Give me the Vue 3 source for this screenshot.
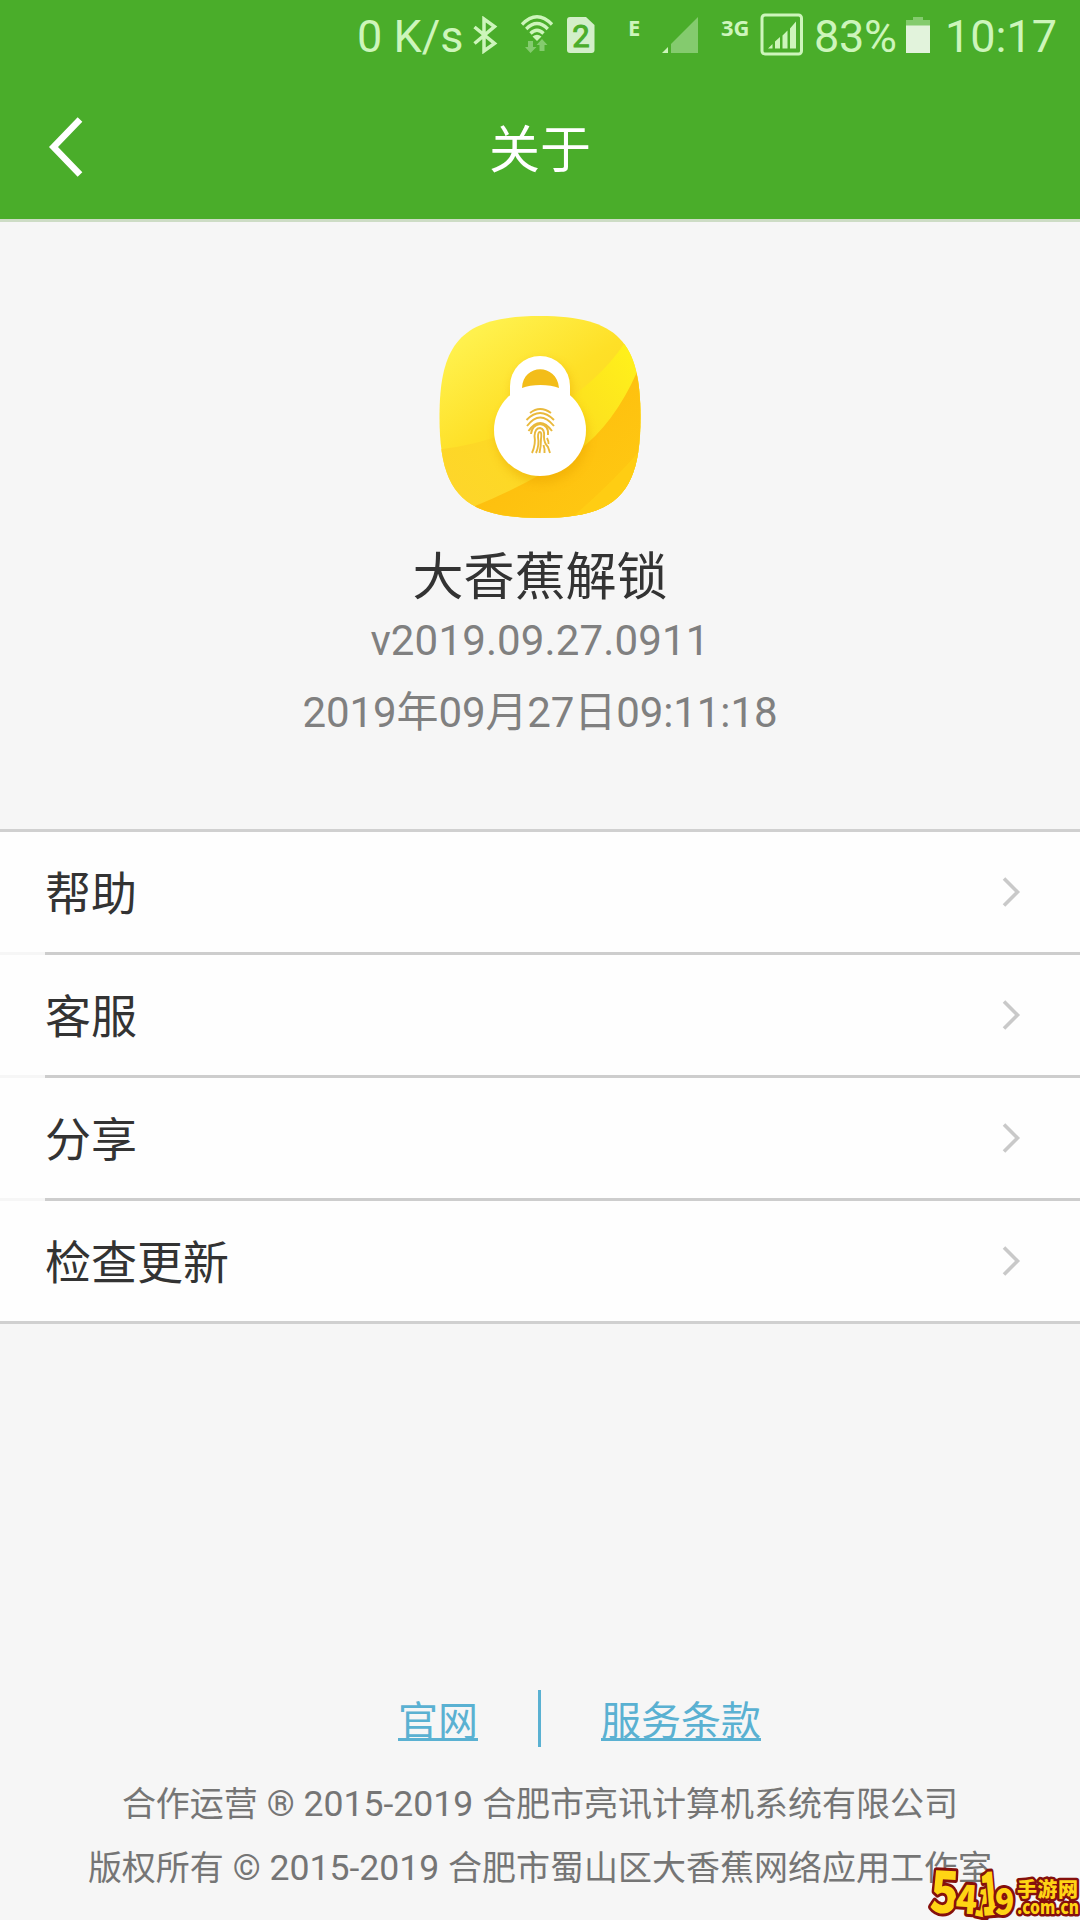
<script setup>
const menu = ['帮助', '客服', '分享', '检查更新']
</script>

<template>
  <div class="page">
    <header class="top">
      <div class="status">
        <span class="speed">0 K/s</span>
        <svg class="bt" viewBox="0 0 26 38"><path d="M2.5 11 L22.5 27.5 L12 35 V3 L22.5 10.5 L2.5 27.5" /></svg>
        <svg class="wifi" viewBox="0 0 34 40">
          <g class="arcs">
            <path d="M2 10.500 Q17 -5 32 10.500" /><path d="M6.200 15 Q17 4 27.800 15" /><path d="M10.500 19.500 Q17 13 23.500 19.500" />
          </g>
          <path class="solid" d="M12.500 22.500 Q17 19 21.500 22.500 L17 27 Z" />
          <path class="dim" d="M8 27 h5 v6 h3.500 L10.500 39 L5 33 h3 Z M19.500 37 v-6 h-3 L22 25 L27.500 31 h-3 v6 Z" />
        </svg>
        <svg class="sim" viewBox="0 0 30 38">
          <path d="M4 1 H20 L28.500 9 V34 Q28.500 37 25.500 37 H4 Q1 37 1 34 V4 Q1 1 4 1 Z" />
          <text x="15" y="30.500" text-anchor="middle">2</text>
        </svg>
        <span class="net edge">E</span>
        <svg class="signal" viewBox="0 0 38 38"><path class="dim" d="M10 37 V28 L37 1 V37 Z" /><path class="solid" d="M1 37 L7 31 V37 Z" /></svg>
        <span class="net third">3G</span>
        <svg class="boxed" viewBox="0 0 44 44">
          <rect x="2" y="2" width="39.500" height="39" rx="3" />
          <path d="M8 35.500 L12.500 31 V35.500 Z M15 35.500 V28.500 L20 24 V35.500 Z M22.500 35.500 V22.500 L27.500 17.500 V35.500 Z M30 35.500 V15.500 L36 8.500 V35.500 Z" />
        </svg>
        <span class="percent">83%</span>
        <svg class="battery" viewBox="0 0 24 36"><path class="dim" d="M0 3 H7 V0 H17 V3 H24 V9 H0 Z" /><path class="full" d="M0 8.500 H24 V36 H0 Z" /></svg>
        <span class="clock">10:17</span>
      </div>
      <div class="nav">
        <svg class="back" viewBox="0 0 36 60"><path d="M32 2.500 L5.500 30 L32 57.500" /></svg>
        <h1>关于</h1>
        <span class="balance"></span>
      </div>
    </header>

    <section class="hero">
      <svg class="logo" viewBox="19 15 202 204">
        <defs>
          <linearGradient id="sun" x1="0.150" y1="0.100" x2="0.700" y2="0.900">
            <stop offset="0" stop-color="#fff14d" /><stop offset="0.450" stop-color="#fee027" /><stop offset="1" stop-color="#fed21d" />
          </linearGradient>
          <linearGradient id="ray" x1="0" y1="0.800" x2="1" y2="0.100">
            <stop offset="0" stop-color="#fed52b" /><stop offset="0.550" stop-color="#fcdc20" /><stop offset="1" stop-color="#fff31a" />
          </linearGradient>
          <linearGradient id="amber" x1="0" y1="0" x2="1" y2="1">
            <stop offset="0" stop-color="#fdb70b" /><stop offset="1" stop-color="#ffcb13" />
          </linearGradient>
          <clipPath id="tile"><path d="M120 16 C198 16 220.500 42 220.500 117 C220.500 192 198 218 120 218 C42 218 19.500 192 19.500 117 C19.500 42 42 16 120 16 Z" /></clipPath>
          <filter id="soft" x="-30%" y="-30%" width="160%" height="160%"><feGaussianBlur stdDeviation="5" /></filter>
        </defs>
        <g clip-path="url(#tile)">
          <rect x="19" y="15" width="202" height="204" fill="url(#sun)" />
          <path d="M15 150 Q80 143 130 112 Q180 80 204 44 L225 30 V225 H15 Z" fill="url(#ray)" />
          <path d="M217 72 Q194 124 158 151 Q110 184 55 206 L60 225 H225 V65 Z" fill="url(#amber)" />
          <path d="M222 148 Q190 185 150 219 H225 Z" fill="#ffd014" opacity="0.700" />
          <path d="M90 86 A30 30 0 0 1 150 86 V98 A46 46 0 1 1 90 98 Z" fill="#e8a400" opacity="0.450" filter="url(#soft)" transform="translate(2 4)" />
        </g>
        <path d="M90 98 V86 A30 30 0 0 1 150 86 V98 Z" fill="#fff" />
        <circle cx="120" cy="130" r="46" fill="#fff" />
        <path d="M102 88 C103 63 137 63 139 88 C130 84 111 84 102 88 Z" fill="#f3bd19" />
        <g class="print">
          <path d="M110 113 Q120 105 131 113" />
          <path d="M106.500 120 Q120 106 134 120" />
          <path d="M107 126 Q120 109 134 126" />
          <path d="M108.500 131 Q120 115 132 131" />
          <path d="M111 134 Q112 125 120 124 Q129 125 128 135" />
          <path d="M112 153 Q116 144 114.500 136 Q115 128 120 128 Q125 129 124 137 Q124 143 128 147 L130 153" />
          <path d="M116 153 Q119.500 145 118 137 Q118 132 120 132 Q122 132 121 139 Q121 146 119.500 153" />
          <path d="M123.500 145 Q125 149 124.500 153" />
          <path d="M127 138 Q129 142 128.500 144" />
        </g>
      </svg>
      <h2>大香蕉解锁</h2>
      <p class="version">v2019.09.27.0911</p>
      <p class="date">2019年09月27日09:11:18</p>
    </section>

    <ul class="menu">
      <li v-for="item in menu" :key="item">
        <span>{{ item }}</span>
        <svg viewBox="0 0 20 34"><path d="M3 3.500 L16.500 17 L3 30.500" /></svg>
      </li>
    </ul>

    <footer>
      <div class="links">
        <a>官网</a><i></i><a>服务条款</a>
      </div>
      <p>合作运营<b> ® 2015-2019 </b>合肥市亮讯计算机系统有限公司</p>
      <p>版权所有<b> © 2015-2019 </b>合肥市蜀山区大香蕉网络应用工作室</p>
    </footer>

    <svg class="mark" viewBox="0 0 160 70">
      <g class="big">
        <text transform="translate(9 62) rotate(3) scale(0.820 1)" font-size="58">5</text>
        <text transform="translate(35 63) rotate(4) scale(0.880 1)" font-size="40">4</text>
        <text transform="translate(53 65) rotate(12) scale(0.650 1)" font-size="40">1</text>
        <text transform="translate(62 66) rotate(-5) scale(0.550 1)" font-size="60">1</text>
        <text transform="translate(74 64) rotate(3) scale(0.900 1)" font-size="36">9</text>
      </g>
      <g class="small">
        <text x="97" y="47" font-size="20" textLength="61">手游网</text>
        <text x="97" y="64" font-size="18" textLength="62" lengthAdjust="spacingAndGlyphs">.com.cn</text>
      </g>
    </svg>
  </div>
</template>

<style>
body {
  margin: 0;
}
</style>

<style scoped>
.page {
  position: relative;
  display: flex;
  flex-direction: column;
  width: 1080px;
  height: 1920px;
  overflow: hidden;
  background: #f6f6f6;
  color: #333;
  font-family: Roboto, 'Noto Sans CJK SC', sans-serif;
}
h1, h2, p, ul {
  margin: 0;
  padding: 0;
  font-weight: 400;
}
svg {
  display: block;
  flex: none;
}
.top {
  height: 219px;
  background: #4aad2a;
  border-bottom: 3px solid #cddcc5;
}
.status {
  display: flex;
  height: 72px;
  color: #cdf5bb;
  fill: #cdf5bb;
  font-size: 45px;
  line-height: 74px;
  white-space: nowrap;
}
.status > span {
  flex: none;
}
.status path.dim {
  fill: #84cb6e;
}
.speed {
  width: 115px;
  margin-left: 357px;
}
.bt {
  width: 26px;
  height: 38px;
  margin-top: 16px;
}
.bt path {
  fill: none;
  stroke: #cdf5bb;
  stroke-width: 3.5;
}
.wifi {
  width: 34px;
  height: 40px;
  margin: 14px 0 0 22px;
}
.status .arcs path {
  fill: none;
  stroke: #cdf5bb;
  stroke-width: 3.3;
}
.sim {
  width: 30px;
  height: 38px;
  margin: 16px 0 0 12px;
  fill: #d3efc9;
}
.sim text {
  fill: #4aad2a;
  stroke: #4aad2a;
  font-size: 31px;
}
.status .net {
  font-family: 'Open Sans', sans-serif;
  font-size: 22px;
  font-weight: 700;
  line-height: 54px;
}
.edge {
  width: 33px;
  margin-left: 32px;
}
.signal {
  width: 38px;
  height: 38px;
  margin-top: 16px;
}
.third {
  width: 39px;
  margin-left: 22px;
}
.boxed {
  width: 44px;
  height: 44px;
  margin-top: 13px;
}
.boxed rect {
  fill: none;
  stroke: #cdf5bb;
  stroke-width: 3;
}
.percent {
  width: 92px;
  margin-left: 10px;
  letter-spacing: -0.3px;
}
.battery {
  width: 24px;
  height: 36px;
  margin-top: 17px;
}
.battery .full {
  fill: #e2f3dc;
}
.clock {
  margin-left: 15px;
}
.nav {
  display: flex;
  align-items: center;
  justify-content: space-between;
  height: 147px;
  padding: 0 48px;
  color: #fff;
}
.back {
  width: 36px;
  height: 60px;
  margin-top: 3px;
}
.back path {
  fill: none;
  stroke: #fff;
  stroke-width: 6.5;
}
.nav h1 {
  margin-top: 10px;
  font-size: 51px;
  line-height: 70px;
}
.balance {
  width: 36px;
}
.hero {
  display: flex;
  flex-direction: column;
  align-items: center;
  height: 607px;
  color: #808080;
  font-size: 42px;
}
.logo {
  width: 202px;
  height: 204px;
  margin-top: 93px;
}
.print {
  fill: none;
  stroke: #e9b93c;
  stroke-width: 1.9;
}
h2 {
  margin-top: 24px;
  color: #333;
  font-size: 51px;
  line-height: 70px;
}
.version {
  margin-top: -2px;
  letter-spacing: 0.15px;
  font-kerning: none;
  line-height: 60px;
}
.date {
  margin-top: 12px;
  letter-spacing: -0.1px;
  line-height: 60px;
}
.menu {
  background: #fefefe;
  border-top: 3px solid #d0d0d0;
  list-style: none;
}
.menu li {
  display: flex;
  align-items: center;
  justify-content: space-between;
  height: 120px;
  padding: 0 59px 0 45px;
  border-bottom: 3px solid;
  border-image: linear-gradient(to right, #f6f6f6 45px, #cdcdcd 45px) 0 0 3 0;
  font-size: 46px;
  line-height: 66px;
}
.menu li:last-child {
  border-image: none;
  border-color: #d0d0d0;
}
.menu span {
  margin-top: 3px;
}
.menu svg {
  width: 20px;
  height: 34px;
}
.menu path {
  fill: none;
  stroke: #c9c9c9;
  stroke-width: 3.6;
}
footer {
  display: flex;
  flex-direction: column;
  align-items: center;
  margin-top: 366px;
  color: #757575;
  font-size: 34px;
  line-height: 64px;
  white-space: nowrap;
}
footer b {
  font-size: 35.6px;
  font-weight: 400;
  white-space: pre;
}
.links {
  display: flex;
  gap: 60px;
  height: 57px;
  margin: 0 0 25px 79px;
  color: #5ab1d2;
  font-size: 40px;
  line-height: 64px;
}
.links a {
  height: 48px;
  border-bottom: 3px solid;
}
.links i {
  width: 3px;
  background: #5ab1d2;
}
.mark {
  position: absolute;
  right: 0;
  bottom: 0;
  width: 160px;
  height: 70px;
  font-family: 'Noto Sans CJK SC', sans-serif;
  font-weight: 900;
}
.mark text {
  fill: #ffd414;
  stroke: #85100c;
  stroke-linejoin: round;
  paint-order: stroke;
}
.big text {
  stroke-width: 6;
}
.small text {
  stroke-width: 5;
}
</style>
